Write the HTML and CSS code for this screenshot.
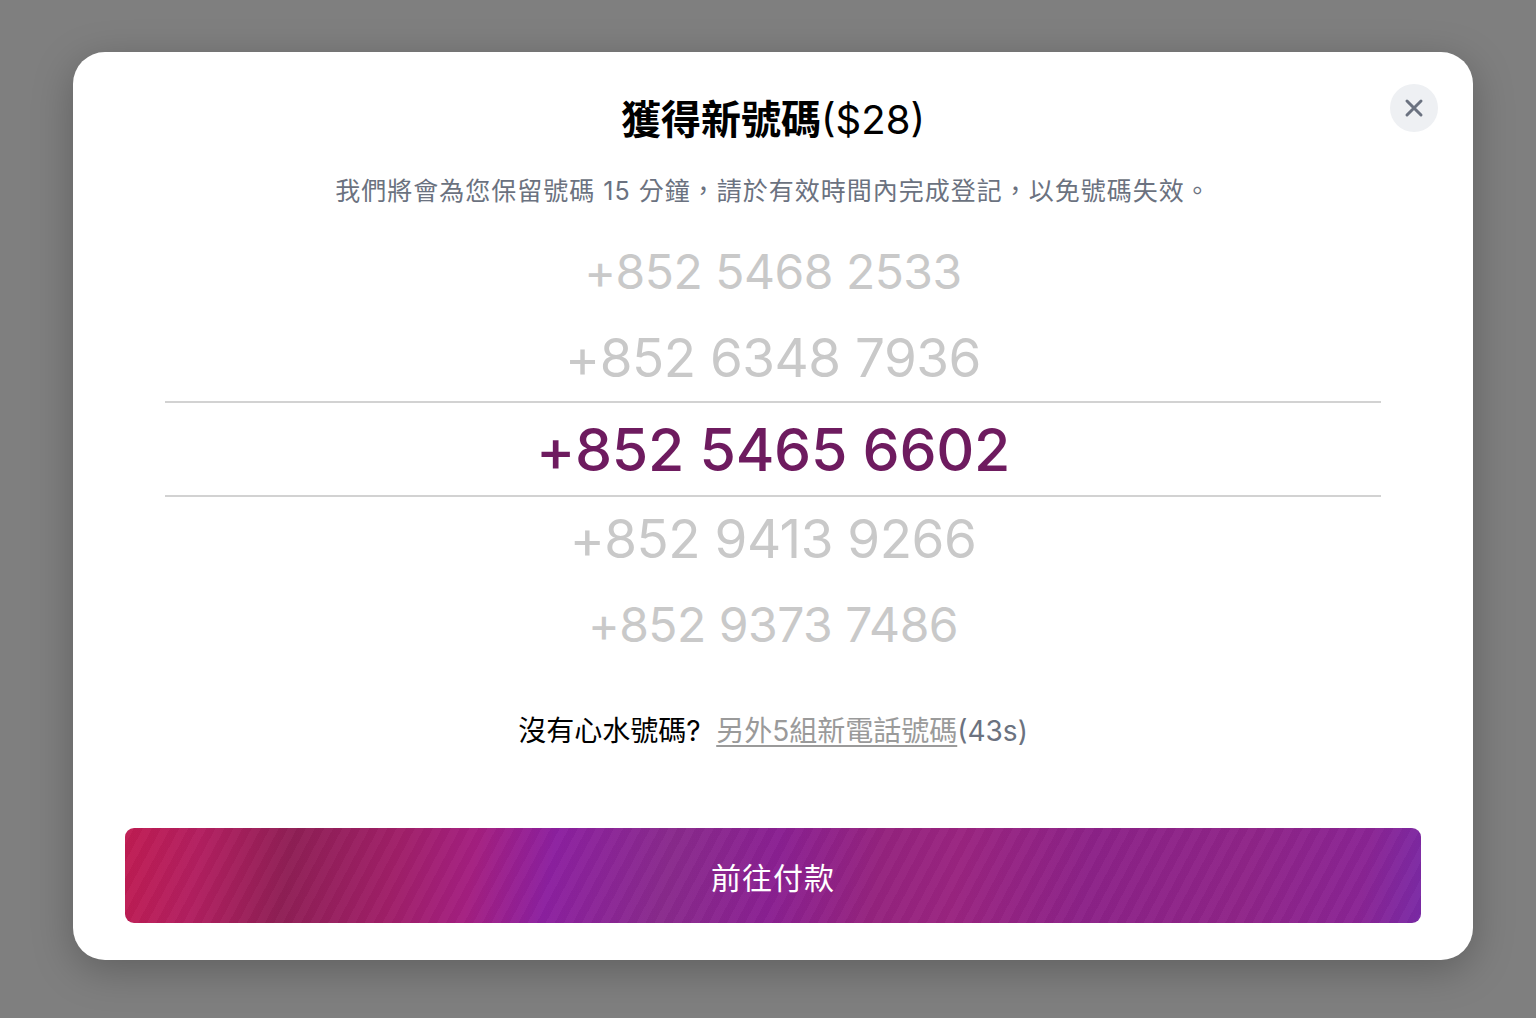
FILE: index.html
```html
<!DOCTYPE html>
<html lang="zh-Hant">
<head>
<meta charset="utf-8">
<title>獲得新號碼</title>
<link rel="stylesheet" href="styles.css">
</head>
<body>
<div class="overlay">
  <div class="modal">
    <button class="close" aria-label="關閉">
      <svg width="24" height="24" viewBox="0 0 24 24"><path d="M5 5 L19 19 M19 5 L5 19" stroke="#6b7280" stroke-width="3" stroke-linecap="round" fill="none"/></svg>
    </button>
    <h1 class="title">獲得新號碼<span class="price">($28)</span></h1>
    <p class="subtitle">我們將會為您保留號碼 15 分鐘，請於有效時間內完成登記，以免號碼失效。</p>
    <div class="picker">
      <div class="row row-far">+852 5468 2533</div>
      <div class="row row-near">+852 6348 7936</div>
      <div class="row row-selected">+852 5465 6602</div>
      <div class="row row-near row-after">+852 9413 9266</div>
      <div class="row row-far">+852 9373 7486</div>
    </div>
    <p class="refresh">沒有心水號碼?&nbsp; <a class="refresh-link" href="#">另外5組新電話號碼</a><span class="timer">(43s)</span></p>
    <button class="pay">前往付款</button>
  </div>
</div>
</body>
</html>
```

FILE: styles.css
```css
html, body {
  margin: 0;
  padding: 0;
  height: 100%;
}
body {
  background: #7f7f7f;
  font-family: "Inter", "Noto Sans CJK TC", sans-serif;
}
.overlay {
  padding-top: 52px;
  padding-left: 73px;
}
.modal {
  position: relative;
  width: 1400px;
  height: 908px;
  box-sizing: border-box;
  background: #fff;
  border-radius: 32px;
  box-shadow: 0 10px 40px rgba(0,0,0,0.25);
  padding: 0 52px;
  display: flex;
  flex-direction: column;
  align-items: stretch;
}
.close {
  position: absolute;
  top: 32px;
  right: 35px;
  width: 48px;
  height: 48px;
  border-radius: 50%;
  border: none;
  background: #eef0f3;
  display: flex;
  align-items: center;
  justify-content: center;
  padding: 0;
}
.title {
  margin: 39px 0 0;
  text-align: center;
  font-family: "Noto Sans CJK TC", sans-serif;
  font-weight: 700;
  font-size: 40px;
  line-height: 52px;
  color: #000;
}
.price {
  font-family: "Inter", sans-serif;
  font-weight: 400;
}
.subtitle {
  margin: 29px 0 0;
  text-align: center;
  font-family: "Inter", "Noto Sans CJK TC", sans-serif;
  font-size: 25px;
  letter-spacing: 1px;
  line-height: 32px;
  color: #6b7280;
}
.picker {
  margin: 21px 40px 0;
  display: flex;
  flex-direction: column;
  font-family: "Inter", sans-serif;
}
.row {
  display: flex;
  align-items: center;
  justify-content: center;
  color: #c9c9c9;
  letter-spacing: -0.5px;
}
.row-far {
  height: 87px;
  font-size: 48px;
}
.row-near {
  height: 86px;
  font-size: 53px;
}
.row-after {
  height: 84px;
}
.row-selected {
  height: 96px;
  box-sizing: border-box;
  border-top: 2px solid #d2d2d2;
  border-bottom: 2px solid #d2d2d2;
  font-size: 59px;
  font-weight: 500;
  letter-spacing: -0.3px;
  color: #6e1b5f;
}
.refresh {
  margin: 45px 0 0;
  text-align: center;
  font-family: "Inter", "Noto Sans CJK TC", sans-serif;
  font-size: 28px;
  line-height: 36px;
  color: #000;
}
.refresh-link {
  color: #9a9a9a;
  text-decoration: underline;
  text-underline-offset: 4px;
}
.timer {
  color: #6b7280;
}
.pay {
  margin-top: 79px;
  height: 95px;
  border: none;
  border-radius: 9px;
  color: #fff;
  font-family: "Noto Sans CJK TC", sans-serif;
  font-size: 30px;
  letter-spacing: 1px;
  background:
    repeating-linear-gradient(118deg, rgba(255,255,255,0.025) 0 8px, rgba(0,0,0,0.02) 8px 16px),
    linear-gradient(100deg, #c01c52 0%, #b21f60 6%, #8f1f55 13%, #a01f68 21%, #a41f80 27%, #8c20a0 33%, #892a8c 42%, #8a2092 50%, #95237e 58%, #9a2480 64%, #8c2288 74%, #8f2488 86%, #8a2494 95%, #7a2aa6 100%);
}
```
